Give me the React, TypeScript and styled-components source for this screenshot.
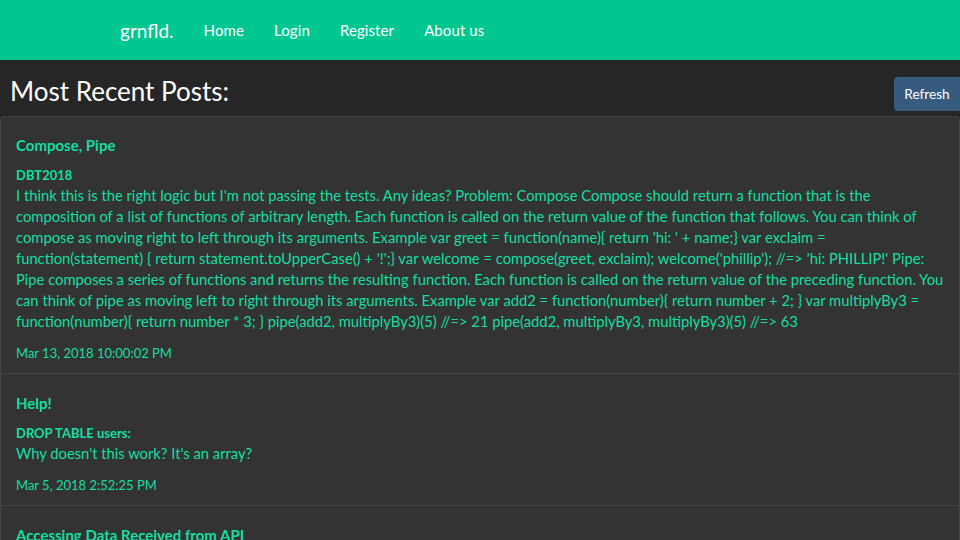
import React from "react";
import styled, { createGlobalStyle } from "styled-components";

const Global = createGlobalStyle`
  html, body { margin: 0; padding: 0; background: #262626; }
  body { font-family: Lato, "Open Sans", sans-serif; color: #fff; }
  * { box-sizing: border-box; }
`;

const Navbar = styled.nav`
  height: 60px;
  background: #00c690;
  display: flex;
  align-items: center;
  padding-left: 120px;
`;

const Brand = styled.a`
  font-size: 19px;
  color: #fff;
  margin-right: 30px;
  text-decoration: none;
`;

const NavLink = styled.a`
  font-size: 15px;
  color: #fff;
  text-decoration: none;
  margin-right: 30px;
  letter-spacing: 0.1px;
`;

const HeaderRow = styled.div`
  display: flex;
  justify-content: space-between;
  align-items: flex-start;
  padding: 17px 0 5px 10px;
`;

const Title = styled.h2`
  margin: -1px 0 0;
  font-size: 26px;
  font-weight: 400;
  line-height: 30px;
  color: #fff;
`;

const Button = styled.button`
  background: #375a7f;
  color: #fff;
  border: none;
  border-radius: 4px 0 0 4px;
  font-family: Lato, sans-serif;
  font-size: 13.6px;
  height: 34px;
  width: 66px;
  padding: 0;
`;

const Card = styled.div`
  background: #333;
  border: 1px solid #444;
  border-radius: 4px;
`;

const Item = styled.div<{ $first?: boolean }>`
  padding: ${(p) => (p.$first ? "19px" : "20px")} 15px 12px;
  border-top: ${(p) => (p.$first ? "none" : "1px solid #444")};
  color: #13dfa0;
`;

const PostTitle = styled.h5`
  margin: 0 0 13px;
  font-size: 15px;
  line-height: 18px;
  font-weight: 700;
`;

const Author = styled.div`
  font-size: 13px;
  font-weight: 700;
  line-height: 16px;
`;

const Body = styled.div`
  font-size: 14.75px;
  line-height: 21px;
  margin-top: 2px;
`;

const DateLine = styled.div`
  font-size: 13px;
  line-height: 16px;
  margin-top: 13px;
`;

const posts = [
  {
    title: "Compose, Pipe",
    author: "DBT2018",
    body: "I think this is the right logic but I'm not passing the tests. Any ideas? Problem: Compose Compose should return a function that is the composition of a list of functions of arbitrary length. Each function is called on the return value of the function that follows. You can think of compose as moving right to left through its arguments. Example var greet = function(name){ return 'hi: ' + name;} var exclaim = function(statement) { return statement.toUpperCase() + '!';} var welcome = compose(greet, exclaim); welcome('phillip'); //=> 'hi: PHILLIP!' Pipe: Pipe composes a series of functions and returns the resulting function. Each function is called on the return value of the preceding function. You can think of pipe as moving left to right through its arguments. Example var add2 = function(number){ return number + 2; } var multiplyBy3 = function(number){ return number * 3; } pipe(add2, multiplyBy3)(5) //=> 21 pipe(add2, multiplyBy3, multiplyBy3)(5) //=> 63",
    date: "Mar 13, 2018 10:00:02 PM",
  },
  {
    title: "Help!",
    author: "DROP TABLE users:",
    body: "Why doesn't this work? It's an array?",
    date: "Mar 5, 2018 2:52:25 PM",
  },
  {
    title: "Accessing Data Received from API",
    author: "",
    body: "",
    date: "",
  },
];

export default function App() {
  return (
    <>
      <Global />
      <Navbar>
        <Brand>grnfld.</Brand>
        <NavLink>Home</NavLink>
        <NavLink>Login</NavLink>
        <NavLink>Register</NavLink>
        <NavLink>About us</NavLink>
      </Navbar>
      <HeaderRow>
        <Title>Most Recent Posts:</Title>
        <Button>Refresh</Button>
      </HeaderRow>
      <Card>
        {posts.map((p, i) => (
          <Item key={i} $first={i === 0}>
            <PostTitle>{p.title}</PostTitle>
            {p.author && <Author>{p.author}</Author>}
            {p.body && <Body>{p.body}</Body>}
            {p.date && <DateLine>{p.date}</DateLine>}
          </Item>
        ))}
      </Card>
    </>
  );
}
